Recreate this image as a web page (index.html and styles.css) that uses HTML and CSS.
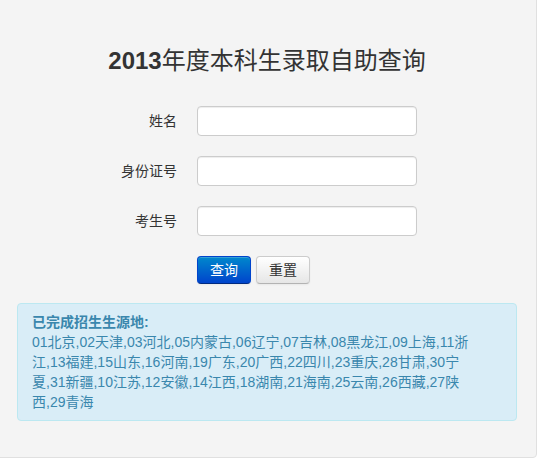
FILE: index.html
```html
<!DOCTYPE html>
<html lang="zh-CN">
<head>
<meta charset="utf-8">
<title>2013年度本科生录取自助查询</title>
<link rel="stylesheet" href="styles.css">
</head>
<body>
<div class="well">
  <div class="container">
    <h2 class="title"><b>2013</b>年度本科生录取自助查询</h2>
    <form class="form">
      <div class="row">
        <label class="label">姓名</label>
        <input class="input" type="text">
      </div>
      <div class="row">
        <label class="label">身份证号</label>
        <input class="input" type="text">
      </div>
      <div class="row">
        <label class="label">考生号</label>
        <input class="input" type="text">
      </div>
      <div class="actions">
        <button type="button" class="btn btn-primary">查询</button>
        <button type="button" class="btn">重置</button>
      </div>
    </form>
    <div class="alert">
      <strong>已完成招生生源地:</strong><br>
      01北京,02天津,03河北,05内蒙古,06辽宁,07吉林,08黑龙江,09上海,11浙江,13福建,15山东,16河南,19广东,20广西,22四川,23重庆,28甘肃,30宁夏,31新疆,10江苏,12安徽,14江西,18湖南,21海南,25云南,26西藏,27陕西,29青海
    </div>
  </div>
</div>
</body>
</html>
```
FILE: styles.css
```css
html, body {
  margin: 0;
  padding: 0;
  background: #ffffff;
}
body {
  font-family: "Liberation Sans", "Noto Sans CJK SC", sans-serif;
  font-size: 14px;
  line-height: 20px;
  color: #333333;
  overflow: hidden;
}
.well {
  margin: -20px 2px 0 -20px;
  height: 478px;
  box-sizing: content-box;
  background: #f4f4f4;
  border: 1px solid #e0e0e0;
  border-radius: 4px;
  padding: 60px 0 0 36px;
  box-sizing: border-box;
}
.container {
  width: 500px;
}
.title {
  margin: 0;
  height: 40px;
  line-height: 40px;
  font-size: 24px;
  font-weight: normal;
  text-align: center;
  color: #333333;
}
.title b {
  font-weight: bold;
}
.form {
  margin: 25px 0 0 0;
}
.row {
  display: flex;
  align-items: center;
  height: 30px;
  margin-bottom: 20px;
}
.label {
  width: 160px;
  text-align: right;
  padding-right: 20px;
  color: #333333;
  font-size: 14px;
}
.input {
  box-sizing: border-box;
  width: 220px;
  height: 30px;
  padding: 4px 6px;
  margin: 0;
  background: #ffffff;
  border: 1px solid #cccccc;
  border-radius: 4px;
  box-shadow: inset 0 1px 1px rgba(0,0,0,0.075);
  font-size: 14px;
}
.actions {
  display: flex;
  gap: 5px;
  padding-left: 180px;
  height: 28px;
}
.btn {
  box-sizing: border-box;
  height: 28px;
  padding: 0 12px;
  line-height: 26px;
  font-family: "Liberation Sans", "Noto Sans CJK SC", sans-serif;
  font-size: 14px;
  color: #333333;
  background: linear-gradient(to bottom, #ffffff, #e6e6e6);
  border: 1px solid #cccccc;
  border-bottom-color: #b3b3b3;
  border-radius: 4px;
  box-shadow: inset 0 1px 0 rgba(255,255,255,0.2), 0 1px 2px rgba(0,0,0,0.05);
  margin: 0;
}
.btn-primary {
  color: #ffffff;
  background: linear-gradient(to bottom, #0088cc, #0044cc);
  border-color: #0044cc #0044cc #002a80;
}
.alert {
  margin-top: 19px;
  padding: 8px 35px 8px 14px;
  background: #d9edf7;
  border: 1px solid #bce8f1;
  border-radius: 4px;
  color: #3a87ad;
  line-height: 20px;
  font-size: 14px;
}
.alert strong {
  font-weight: bold;
}
```
